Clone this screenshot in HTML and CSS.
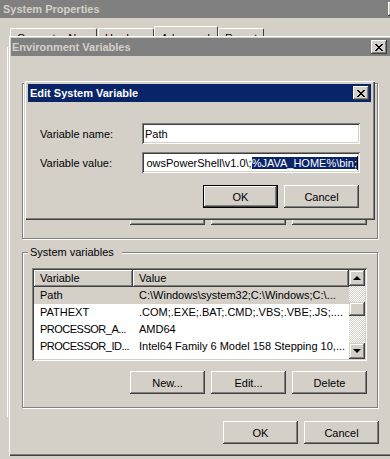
FILE: index.html
```html
<!DOCTYPE html>
<html lang="en">
<head>
    <meta charset="UTF-8">
    <title>Edit System Variable</title>
    <link rel="stylesheet" href="styles.css">
</head>
<body>
    <div class="desktop">
        <div class="window sysprop">
            <div class="titlebar inactive">
                <span class="title">System Properties</span>
                <span class="capbtn"></span>
            </div>
            <div class="tabs">
                <div class="tab cn">Computer Name</div>
                <div class="tab hw">Hardware</div>
                <div class="tab adv selected">Advanced</div>
                <div class="tab rem">Remote</div>
            </div>
            <div class="tabpage"></div>
        </div>

        <div class="window envvars">
            <div class="titlebar inactive">
                <span class="title">Environment Variables</span>
                <span class="capbtn">
                    <svg width="8" height="7" viewBox="0 0 8 7"><path d="M0 0h2v1h-2zM6 0h2v1h-2zM1 1h2v1h-2zM5 1h2v1h-2zM2 2h4v1h-4zM3 3h2v1h-2zM2 4h4v1h-4zM1 5h2v1h-2zM5 5h2v1h-2zM0 6h2v1h-2zM6 6h2v1h-2z"/></svg>
                </span>
            </div>

            <div class="group user">
                <div class="listview"></div>
                <div class="btnrow">
                    <button class="btn">New...</button>
                    <button class="btn">Edit...</button>
                    <button class="btn">Delete</button>
                </div>
            </div>

            <div class="group system">
                <span class="legend">System variables</span>
                <div class="listview">
                    <div class="lv-main">
                        <div class="lv-head"><span class="col-name">Variable</span><span class="col-value">Value</span></div>
                        <div class="lv-row selected"><span class="col-name">Path</span><span class="col-value">C:\Windows\system32;C:\Windows;C:\...</span></div>
                        <div class="lv-row"><span class="col-name">PATHEXT</span><span class="col-value">.COM;.EXE;.BAT;.CMD;.VBS;.VBE;.JS;....</span></div>
                        <div class="lv-row"><span class="col-name tight">PROCESSOR_A...</span><span class="col-value">AMD64</span></div>
                        <div class="lv-row"><span class="col-name tight">PROCESSOR_ID...</span><span class="col-value">Intel64 Family 6 Model 158 Stepping 10,...</span></div>
                    </div>
                    <div class="scrollbar">
                        <span class="sb-btn"><i class="arrow up"></i></span>
                        <span class="sb-track short"></span>
                        <span class="sb-thumb"></span>
                        <span class="sb-track"></span>
                        <span class="sb-btn"><i class="arrow down"></i></span>
                    </div>
                </div>
                <div class="btnrow">
                    <button class="btn">New...</button>
                    <button class="btn">Edit...</button>
                    <button class="btn">Delete</button>
                </div>
            </div>

            <div class="btnrow dlgbtns">
                <button class="btn">OK</button>
                <button class="btn">Cancel</button>
            </div>
        </div>

        <div class="window editvar">
            <div class="titlebar active">
                <span class="title">Edit System Variable</span>
                <span class="capbtn">
                    <svg width="8" height="7" viewBox="0 0 8 7"><path d="M0 0h2v1h-2zM6 0h2v1h-2zM1 1h2v1h-2zM5 1h2v1h-2zM2 2h4v1h-4zM3 3h2v1h-2zM2 4h4v1h-4zM1 5h2v1h-2zM5 5h2v1h-2zM0 6h2v1h-2zM6 6h2v1h-2z"/></svg>
                </span>
            </div>
            <div class="form">
                <div class="field">
                    <label>Variable name:</label>
                    <div class="textbox"><span>Path</span></div>
                </div>
                <div class="field">
                    <label>Variable value:</label>
                    <div class="textbox value"><span>owsPowerShell\v1.0\;<span class="sel">%JAVA_HOME%\bin;</span></span><i class="caret"></i></div>
                </div>
                <div class="btnrow">
                    <button class="btn default">OK</button>
                    <button class="btn">Cancel</button>
                </div>
            </div>
        </div>
    </div>
    <div class="taskbar"></div>
</body>
</html>
```

FILE: styles.css
```css
body {
    margin: 0;
    width: 390px;
    height: 459px;
    overflow: hidden;
    background-color: #d4d0c8;
    font-family: "Liberation Sans", Arial, sans-serif;
    font-size: 11px;
    color: #000;
    display: flex;
    flex-direction: column;
}
.desktop {
    position: relative;
    flex: 1;
}
.taskbar {
    height: 3px;
    background-color: #141414;
    border-top: 1px solid #404040;
}

/* windows */
.window {
    position: absolute;
    box-sizing: border-box;
    background-color: #d4d0c8;
}
.titlebar {
    display: flex;
    align-items: center;
    justify-content: space-between;
    height: 18px;
    padding-left: 2px;
    font-weight: bold;
}
.titlebar.inactive {
    background-color: #808080;
    color: #d4d0c8;
}
.titlebar.active {
    background-color: #0a246a;
    color: #fff;
}
.capbtn {
    display: flex;
    align-items: center;
    justify-content: center;
    width: 16px;
    height: 14px;
    margin-right: 2px;
    box-sizing: border-box;
    background-color: #d4d0c8;
    box-shadow: inset -1px -1px #404040, inset 1px 1px #fff, inset -2px -2px #808080;
}
.capbtn svg {
    margin-left: -1px;
}

/* system properties behind */
.sysprop {
    left: -4px;
    top: -4px;
    width: 414px;
    height: 470px;
    padding: 4px;
}
.sysprop .titlebar {
    padding-left: 3px;
}
.tabs {
    display: flex;
    align-items: flex-start;
    height: 21px;
    margin-top: 8px;
    padding-left: 10px;
}
/* only the top of each tab shows above the env window */
.tab {
    box-sizing: border-box;
    height: 8px;
    margin-top: 2px;
    padding: 3px 6px 0;
    border-top: 1px solid #fff;
    border-left: 1px solid #fff;
    border-right: 1px solid #404040;
    border-radius: 2px 2px 0 0;
    line-height: 13px;
    white-space: nowrap;
    overflow: hidden;
}
.tab.cn { width: 87px; }
.tab.hw { width: 56px; margin-left: 1px; }
.tab.adv { width: 64px; height: 10px; margin-top: 0; padding-top: 5px; }
.tab.rem { width: 46px; }
.tabpage {
    margin-left: 7px;
    height: 370px;
    border-left: 1px solid #fff;
}

/* environment variables */
.envvars {
    left: 9px;
    top: 36px;
    width: 384px;
    height: 420px;
    padding: 2px 2px 0;
    box-shadow: inset 1px 1px #fff, inset -1px -1px #404040, inset -2px -2px #808080;
}
.envvars .titlebar {
    padding-left: 1px;
}
.envvars .capbtn {
    margin-right: 4px;
}
.group {
    position: relative;
    box-sizing: border-box;
    width: 356px;
    height: 156px;
    margin-left: 11px;
    padding: 15px 9px 0;
    border: 1px solid #808080;
    box-shadow: inset 1px 1px #fff, 1px 1px #fff;
}
.group.user {
    margin-top: 27px;
}
.group.system {
    margin-top: 13px;
}
.legend {
    position: absolute;
    top: -8px;
    left: 5px;
    padding: 0 8px 0 2px;
    background-color: #d4d0c8;
    line-height: 14px;
}
.listview {
    display: flex;
    box-sizing: border-box;
    width: 335px;
    height: 93px;
    background-color: #fff;
    box-shadow: inset 1px 1px #808080, inset -1px -1px #fff, inset 2px 2px #404040, inset -2px -2px #d4d0c8;
    padding: 2px;
}
.lv-main {
    flex: 1;
    overflow: hidden;
}
.lv-head, .lv-row {
    display: flex;
    height: 17px;
    line-height: 17px;
    white-space: nowrap;
}
.lv-head span {
    box-sizing: border-box;
    background-color: #d4d0c8;
    box-shadow: inset -1px -1px #404040, inset 1px 1px #fff, inset -2px -2px #808080;
}
.col-name {
    width: 99px;
    padding-left: 6px;
    box-sizing: border-box;
}
.col-name.tight {
    letter-spacing: -0.5px;
}
.col-value {
    flex: 1;
    padding-left: 6px;
    overflow: hidden;
}
.lv-row.selected {
    background-color: #d4d0c8;
}
.scrollbar {
    display: flex;
    flex-direction: column;
    width: 16px;
}
.sb-btn, .sb-thumb {
    display: flex;
    align-items: center;
    justify-content: center;
    box-sizing: border-box;
    background-color: #d4d0c8;
    box-shadow: inset -1px -1px #404040, inset 1px 1px #d4d0c8, inset -2px -2px #808080, inset 2px 2px #fff;
}
.sb-btn {
    height: 16px;
}
.sb-thumb {
    height: 14px;
}
.sb-track {
    height: 27px;
    background: repeating-conic-gradient(#fff 0 25%, #d4d0c8 0 50%) 0 0 / 2px 2px;
}
.sb-track.short {
    height: 16px;
}
.arrow {
    width: 0;
    height: 0;
    border-left: 4px solid transparent;
    border-right: 4px solid transparent;
}
.arrow.up {
    border-bottom: 4px solid #000;
    margin-top: -1px;
}
.arrow.down {
    border-top: 4px solid #000;
}
.btnrow {
    display: flex;
    justify-content: flex-end;
    gap: 6px;
    margin-top: 10px;
    padding-right: 1px;
}
.btn {
    box-sizing: border-box;
    width: 75px;
    height: 23px;
    padding: 0;
    border: 0;
    font: inherit;
    color: #000;
    background-color: #d4d0c8;
    box-shadow: inset -1px -1px #404040, inset 1px 1px #fff, inset -2px -2px #808080;
}
.btn.default {
    border: 1px solid #000;
}
.dlgbtns {
    width: 357px;
    margin: 13px 0 0 11px;
    padding: 0;
}

/* edit dialog */
.editvar {
    left: 24px;
    top: 80px;
    width: 351px;
    height: 140px;
    padding: 4px;
    box-shadow: inset 1px 1px #d4d0c8, inset 2px 2px #fff, inset -1px -1px #404040, inset -2px -2px #808080;
}
.form {
    padding: 21px 11px 0 12px;
}
.field {
    display: flex;
    align-items: center;
    margin-bottom: 8px;
}
.field label {
    width: 102px;
}
.textbox {
    display: flex;
    align-items: center;
    box-sizing: border-box;
    width: 218px;
    height: 21px;
    padding: 0 3px;
    background-color: #fff;
    box-shadow: inset 1px 1px #808080, inset -1px -1px #fff, inset 2px 2px #404040, inset -2px -2px #d4d0c8;
    white-space: nowrap;
    overflow: hidden;
}
.textbox.value {
    justify-content: flex-end;
    padding: 0 2px;
}
.sel {
    background-color: #0a246a;
    color: #fff;
}
.caret {
    flex: none;
    width: 1px;
    height: 14px;
    background-color: #000;
}
.form .btnrow {
    margin-top: 12px;
}
```
